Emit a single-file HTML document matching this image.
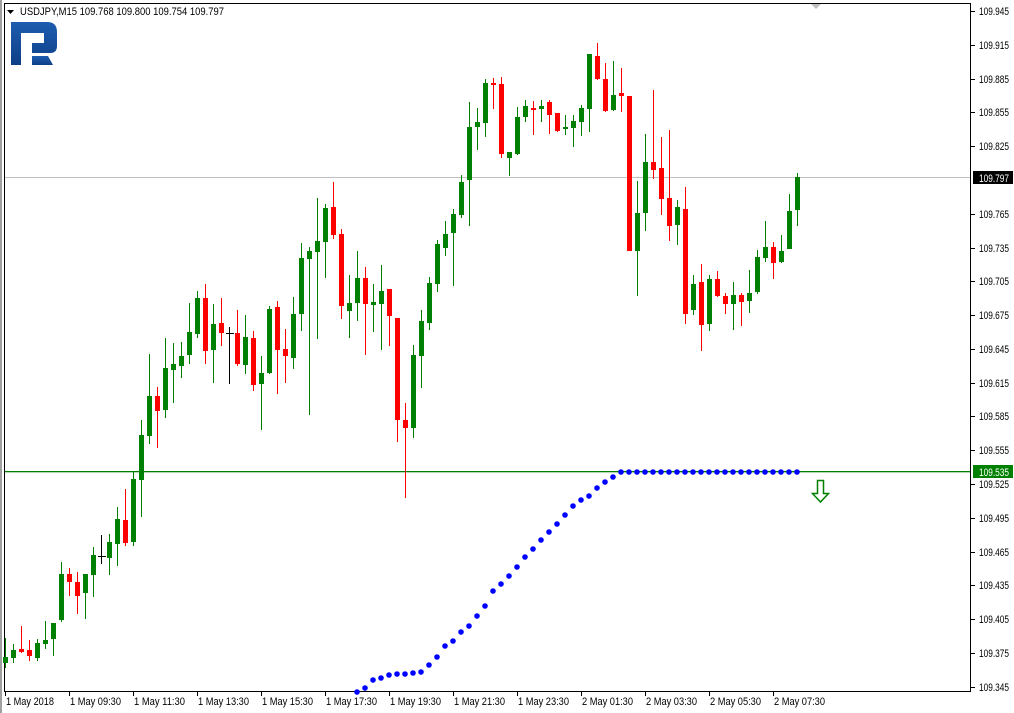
<!DOCTYPE html>
<html><head><meta charset="utf-8"><style>
html,body{margin:0;padding:0;background:#fff;}
svg{display:block;}
text{font-family:"Liberation Sans",Tahoma,sans-serif;font-size:11px;fill:#000;}
</style></head><body>
<svg width="1014" height="713" viewBox="0 0 1014 713" xmlns="http://www.w3.org/2000/svg">
<rect x="0" y="0" width="1014" height="713" fill="#fff"/>
<rect x="0" y="0" width="2" height="713" fill="#a0a0a0"/>
<line x1="4.5" y1="3" x2="4.5" y2="692" stroke="#000"/>
<line x1="4" y1="3.5" x2="971" y2="3.5" stroke="#000"/>
<line x1="970.5" y1="3" x2="970.5" y2="692" stroke="#000"/>
<line x1="4" y1="691.5" x2="971" y2="691.5" stroke="#000"/>
<line x1="5" y1="177.5" x2="970" y2="177.5" stroke="#c0c0c0"/>
<rect x="5" y="471" width="965" height="1.3" fill="#008000"/>
<defs><linearGradient id="lg" x1="0" y1="0" x2="0" y2="1"><stop offset="0" stop-color="#1e5cb0"/><stop offset="1" stop-color="#0d3f86"/></linearGradient></defs>
<path d="M11 22H47Q57 22 57 32V46Q57 53 50 53H32V43H44V33H21V65H11Z" fill="url(#lg)"/>
<path d="M32 56H48L53 65H32Z" fill="url(#lg)"/>
<path d="M7 10H14L10.5 14Z" fill="#000"/>
<text x="20" y="15" textLength="204" lengthAdjust="spacingAndGlyphs">USDJPY,M15  109.768 109.800 109.754 109.797</text>
<path d="M811 4H821L816 9Z" fill="#c0c0c0"/>
<path stroke="#008000" stroke-width="1" fill="none" d="M5.5 638V668M13.5 644V663M37.5 639V661M45.5 621V649M53.5 623V656M61.5 562V622M85.5 574V619M93.5 547V597M109.5 534V575M117.5 507V566M133.5 471V546M141.5 420V517M149.5 354V444M165.5 338V418M173.5 343V403M181.5 342V378M189.5 303V364M197.5 291V338M213.5 304V383M245.5 315V374M261.5 356V430M269.5 306V374M293.5 297V369M301.5 243V331M309.5 247V415M317.5 198V339M325.5 204V278M349.5 275V338M357.5 251V321M373.5 284V332M381.5 265V350M413.5 345V438M421.5 310V388M429.5 277V330M437.5 240V292M445.5 221V256M453.5 209V286M461.5 175V218M469.5 102V226M477.5 108V150M485.5 79V137M509.5 152V176M517.5 107V155M525.5 100V122M541.5 100V122M565.5 115V135M573.5 115V147M581.5 105V136M589.5 54V132M613.5 61V111M637.5 181V296M645.5 134V231M677.5 200V245M693.5 275V315M709.5 275V331M733.5 282V330M749.5 270V313M757.5 250V294M765.5 221V262M781.5 235V263M789.5 194V249M797.5 173V226"/>
<path stroke="#ff0000" stroke-width="1" fill="none" d="M21.5 626V653M29.5 640V661M69.5 568V596M77.5 572V614M125.5 489V546M157.5 387V448M205.5 284V364M221.5 298V346M237.5 310V366M253.5 331V391M277.5 301V394M285.5 329V383M333.5 182V239M341.5 229V319M365.5 267V355M389.5 289V346M397.5 318V442M405.5 403V498M493.5 78V109M501.5 77V158M533.5 101V135M549.5 100V134M557.5 113V132M597.5 43V80M605.5 63V112M621.5 68V112M629.5 96V251M653.5 90V179M661.5 137V215M669.5 130V241M685.5 187V324M701.5 264V351M717.5 271V297M725.5 293V314M741.5 293V326M773.5 242V279"/>
<path stroke="#000" stroke-width="1" fill="none" d="M101.5 535V564M98 556.5H106M229.5 327V384M226 333.5H234"/>
<g fill="#008000">
<rect x="3" y="657" width="5" height="6"/><rect x="11" y="650" width="5" height="8"/><rect x="35" y="643" width="5" height="15"/><rect x="43" y="640" width="5" height="4"/><rect x="51" y="623" width="5" height="16"/><rect x="59" y="574" width="5" height="46"/><rect x="83" y="574" width="5" height="19"/><rect x="91" y="555" width="5" height="20"/><rect x="107" y="542" width="5" height="16"/><rect x="115" y="519" width="5" height="25"/><rect x="131" y="479" width="5" height="63"/><rect x="139" y="435" width="5" height="45"/><rect x="147" y="396" width="5" height="40"/><rect x="163" y="368" width="5" height="42"/><rect x="171" y="364" width="5" height="6"/><rect x="179" y="356" width="5" height="10"/><rect x="187" y="332" width="5" height="23"/><rect x="195" y="298" width="5" height="36"/><rect x="211" y="324" width="5" height="26"/><rect x="243" y="337" width="5" height="28"/><rect x="259" y="373" width="5" height="11"/><rect x="267" y="309" width="5" height="64"/><rect x="291" y="314" width="5" height="44"/><rect x="299" y="258" width="5" height="56"/><rect x="307" y="251" width="5" height="8"/><rect x="315" y="241" width="5" height="11"/><rect x="323" y="208" width="5" height="34"/><rect x="347" y="303" width="5" height="8"/><rect x="355" y="278" width="5" height="25"/><rect x="371" y="302" width="5" height="3"/><rect x="379" y="291" width="5" height="13"/><rect x="411" y="355" width="5" height="73"/><rect x="419" y="321" width="5" height="35"/><rect x="427" y="283" width="5" height="40"/><rect x="435" y="244" width="5" height="40"/><rect x="443" y="234" width="5" height="14"/><rect x="451" y="214" width="5" height="19"/><rect x="459" y="182" width="5" height="33"/><rect x="467" y="127" width="5" height="53"/><rect x="475" y="122" width="5" height="5"/><rect x="483" y="83" width="5" height="40"/><rect x="507" y="152" width="5" height="6"/><rect x="515" y="117" width="5" height="37"/><rect x="523" y="106" width="5" height="11"/><rect x="539" y="106" width="5" height="3"/><rect x="563" y="127" width="5" height="2"/><rect x="571" y="121" width="5" height="7"/><rect x="579" y="108" width="5" height="14"/><rect x="587" y="54" width="5" height="55"/><rect x="611" y="95" width="5" height="15"/><rect x="635" y="213" width="5" height="38"/><rect x="643" y="162" width="5" height="51"/><rect x="675" y="207" width="5" height="18"/><rect x="691" y="284" width="5" height="26"/><rect x="707" y="279" width="5" height="45"/><rect x="731" y="295" width="5" height="9"/><rect x="747" y="293" width="5" height="8"/><rect x="755" y="257" width="5" height="35"/><rect x="763" y="247" width="5" height="11"/><rect x="779" y="251" width="5" height="11"/><rect x="787" y="211" width="5" height="38"/><rect x="795" y="177" width="5" height="33"/>
</g>
<g fill="#ff0000">
<rect x="19" y="649" width="5" height="3"/><rect x="27" y="650" width="5" height="6"/><rect x="67" y="574" width="5" height="8"/><rect x="75" y="582" width="5" height="14"/><rect x="123" y="520" width="5" height="23"/><rect x="155" y="396" width="5" height="15"/><rect x="203" y="298" width="5" height="53"/><rect x="219" y="323" width="5" height="10"/><rect x="235" y="333" width="5" height="31"/><rect x="251" y="338" width="5" height="47"/><rect x="275" y="307" width="5" height="43"/><rect x="283" y="349" width="5" height="7"/><rect x="331" y="207" width="5" height="28"/><rect x="339" y="234" width="5" height="72"/><rect x="363" y="278" width="5" height="26"/><rect x="387" y="289" width="5" height="27"/><rect x="395" y="318" width="5" height="102"/><rect x="403" y="420" width="5" height="8"/><rect x="491" y="83" width="5" height="2"/><rect x="499" y="84" width="5" height="70"/><rect x="531" y="108" width="5" height="2"/><rect x="547" y="102" width="5" height="13"/><rect x="555" y="113" width="5" height="18"/><rect x="595" y="56" width="5" height="23"/><rect x="603" y="79" width="5" height="32"/><rect x="619" y="93" width="5" height="3"/><rect x="627" y="96" width="5" height="155"/><rect x="651" y="162" width="5" height="8"/><rect x="659" y="168" width="5" height="31"/><rect x="667" y="198" width="5" height="28"/><rect x="683" y="209" width="5" height="105"/><rect x="699" y="282" width="5" height="43"/><rect x="715" y="279" width="5" height="17"/><rect x="723" y="296" width="5" height="8"/><rect x="739" y="295" width="5" height="7"/><rect x="771" y="247" width="5" height="16"/>
</g>
<g fill="#0000ff">
<circle cx="357" cy="692" r="2.8"/><circle cx="365" cy="688" r="2.8"/><circle cx="373" cy="680" r="2.8"/><circle cx="381" cy="678" r="2.8"/><circle cx="389" cy="675" r="2.8"/><circle cx="397" cy="674" r="2.8"/><circle cx="405" cy="674" r="2.8"/><circle cx="413" cy="673" r="2.8"/><circle cx="421" cy="672" r="2.8"/><circle cx="429" cy="665" r="2.8"/><circle cx="437" cy="657" r="2.8"/><circle cx="445" cy="646" r="2.8"/><circle cx="453" cy="641" r="2.8"/><circle cx="461" cy="632" r="2.8"/><circle cx="469" cy="626" r="2.8"/><circle cx="477" cy="616" r="2.8"/><circle cx="485" cy="606" r="2.8"/><circle cx="493" cy="591" r="2.8"/><circle cx="501" cy="584" r="2.8"/><circle cx="509" cy="576" r="2.8"/><circle cx="517" cy="567" r="2.8"/><circle cx="525" cy="557" r="2.8"/><circle cx="533" cy="549" r="2.8"/><circle cx="541" cy="540" r="2.8"/><circle cx="549" cy="532" r="2.8"/><circle cx="557" cy="524" r="2.8"/><circle cx="565" cy="515" r="2.8"/><circle cx="573" cy="506" r="2.8"/><circle cx="581" cy="500" r="2.8"/><circle cx="589" cy="496" r="2.8"/><circle cx="597" cy="488" r="2.8"/><circle cx="605" cy="482" r="2.8"/><circle cx="613" cy="477" r="2.8"/>
<circle cx="621" cy="472" r="2.8"/><circle cx="629" cy="472" r="2.8"/><circle cx="637" cy="472" r="2.8"/><circle cx="645" cy="472" r="2.8"/><circle cx="653" cy="472" r="2.8"/><circle cx="661" cy="472" r="2.8"/><circle cx="669" cy="472" r="2.8"/><circle cx="677" cy="472" r="2.8"/><circle cx="685" cy="472" r="2.8"/><circle cx="693" cy="472" r="2.8"/><circle cx="701" cy="472" r="2.8"/><circle cx="709" cy="472" r="2.8"/><circle cx="717" cy="472" r="2.8"/><circle cx="725" cy="472" r="2.8"/><circle cx="733" cy="472" r="2.8"/><circle cx="741" cy="472" r="2.8"/><circle cx="749" cy="472" r="2.8"/><circle cx="757" cy="472" r="2.8"/><circle cx="765" cy="472" r="2.8"/><circle cx="773" cy="472" r="2.8"/><circle cx="781" cy="472" r="2.8"/><circle cx="789" cy="472" r="2.8"/><circle cx="797" cy="472" r="2.8"/>
</g>
<path d="M817.5 480.5H823.5V493.5H828.5L820.5 502L812.5 493.5H817.5Z" fill="none" stroke="#008000" stroke-width="1.5"/>
<path stroke="#000" d="M971 11.5h4M971 45.5h4M971 79.5h4M971 112.5h4M971 146.5h4M971 214.5h4M971 248.5h4M971 281.5h4M971 315.5h4M971 349.5h4M971 383.5h4M971 416.5h4M971 450.5h4M971 484.5h4M971 518.5h4M971 552.5h4M971 585.5h4M971 619.5h4M971 653.5h4M971 687.5h4"/>
<g>
<text x="979" y="15" textLength="30" lengthAdjust="spacingAndGlyphs">109.945</text><text x="979" y="49" textLength="30" lengthAdjust="spacingAndGlyphs">109.915</text><text x="979" y="83" textLength="30" lengthAdjust="spacingAndGlyphs">109.885</text><text x="979" y="116" textLength="30" lengthAdjust="spacingAndGlyphs">109.855</text><text x="979" y="150" textLength="30" lengthAdjust="spacingAndGlyphs">109.825</text><text x="979" y="218" textLength="30" lengthAdjust="spacingAndGlyphs">109.765</text><text x="979" y="252" textLength="30" lengthAdjust="spacingAndGlyphs">109.735</text><text x="979" y="285" textLength="30" lengthAdjust="spacingAndGlyphs">109.705</text><text x="979" y="319" textLength="30" lengthAdjust="spacingAndGlyphs">109.675</text><text x="979" y="353" textLength="30" lengthAdjust="spacingAndGlyphs">109.645</text><text x="979" y="387" textLength="30" lengthAdjust="spacingAndGlyphs">109.615</text><text x="979" y="420" textLength="30" lengthAdjust="spacingAndGlyphs">109.585</text><text x="979" y="454" textLength="30" lengthAdjust="spacingAndGlyphs">109.555</text><text x="979" y="488" textLength="30" lengthAdjust="spacingAndGlyphs">109.525</text><text x="979" y="522" textLength="30" lengthAdjust="spacingAndGlyphs">109.495</text><text x="979" y="556" textLength="30" lengthAdjust="spacingAndGlyphs">109.465</text><text x="979" y="589" textLength="30" lengthAdjust="spacingAndGlyphs">109.435</text><text x="979" y="623" textLength="30" lengthAdjust="spacingAndGlyphs">109.405</text><text x="979" y="657" textLength="30" lengthAdjust="spacingAndGlyphs">109.375</text><text x="979" y="691" textLength="30" lengthAdjust="spacingAndGlyphs">109.345</text>
</g>
<rect x="973" y="171" width="40" height="13" fill="#000"/>
<text x="979" y="182" textLength="30" lengthAdjust="spacingAndGlyphs" style="fill:#fff">109.797</text>
<rect x="973" y="465" width="40" height="13" fill="#008000"/>
<text x="979" y="476" textLength="30" lengthAdjust="spacingAndGlyphs" style="fill:#fff">109.535</text>
<path stroke="#000" d="M5.5 692v4M69.5 692v4M133.5 692v4M197.5 692v4M261.5 692v4M325.5 692v4M389.5 692v4M453.5 692v4M517.5 692v4M581.5 692v4M645.5 692v4M709.5 692v4M773.5 692v4"/>
<g>
<text x="6" y="705" textLength="48" lengthAdjust="spacingAndGlyphs">1 May 2018</text><text x="70" y="705" textLength="51" lengthAdjust="spacingAndGlyphs">1 May 09:30</text><text x="134" y="705" textLength="51" lengthAdjust="spacingAndGlyphs">1 May 11:30</text><text x="198" y="705" textLength="51" lengthAdjust="spacingAndGlyphs">1 May 13:30</text><text x="262" y="705" textLength="51" lengthAdjust="spacingAndGlyphs">1 May 15:30</text><text x="326" y="705" textLength="51" lengthAdjust="spacingAndGlyphs">1 May 17:30</text><text x="390" y="705" textLength="51" lengthAdjust="spacingAndGlyphs">1 May 19:30</text><text x="454" y="705" textLength="51" lengthAdjust="spacingAndGlyphs">1 May 21:30</text><text x="518" y="705" textLength="51" lengthAdjust="spacingAndGlyphs">1 May 23:30</text><text x="582" y="705" textLength="51" lengthAdjust="spacingAndGlyphs">2 May 01:30</text><text x="646" y="705" textLength="51" lengthAdjust="spacingAndGlyphs">2 May 03:30</text><text x="710" y="705" textLength="51" lengthAdjust="spacingAndGlyphs">2 May 05:30</text><text x="774" y="705" textLength="51" lengthAdjust="spacingAndGlyphs">2 May 07:30</text>
</g>
</svg>
</body></html>
